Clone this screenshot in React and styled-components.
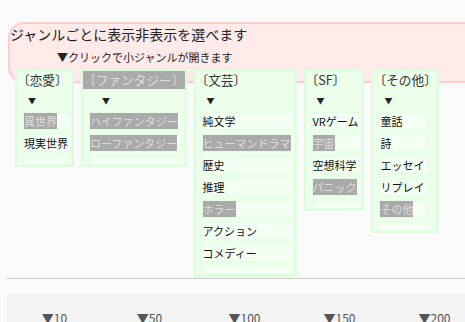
import styled, { createGlobalStyle } from 'styled-components';

const GlobalStyle = createGlobalStyle`
  html, body {
    margin: 0;
    background: #fafafa;
    overflow: hidden;
    font-family: "Noto Sans CJK JP", "Noto Sans", sans-serif;
    color: #333;
  }
`;

const Page = styled.div`
  width: 475px;
  padding: 22px 0 0 7px;
`;

const Banner = styled.div`
  width: 500px;
  height: 57px;
  margin-left: 1px;
  border: 2px solid #ffcdcd;
  border-radius: 16px;
  background: #ffeaea;
`;

const Heading = styled.div`
  font-size: 14px;
  line-height: 20px;
  color: #222;
`;

const Hint = styled.div`
  margin-top: 5px;
  padding-left: 47px;
  font-size: 11px;
  line-height: 16px;
  color: #222;
`;

const Columns = styled.div`
  position: relative;
  display: flex;
  align-items: flex-start;
  gap: 7px;
  margin-top: -14px;
  padding-left: 8px;
`;

const Column = styled.div`
  background: #ebffeb;
  border: 2px solid #dcfddc;
`;

const Title = styled.div`
  font-size: 12.7px;
  line-height: 18px;
  white-space: nowrap;
  background: ${(p) => (p.$hidden ? '#aaa' : 'transparent')};
  color: ${(p) => (p.$hidden ? '#ddd' : '#333')};
`;

const Arrow = styled.div`
  height: 23px;
  line-height: 23px;
  font-size: 8px;
  padding-left: ${(p) => p.$indent}px;
  color: #222;
`;

const List = styled.div`
  display: flex;
  flex-direction: column;
  gap: 4px;
  width: fit-content;
  margin-left: 6px;
`;

const Item = styled.div`
  height: 16px;
  padding-right: 3px;
  border: 1px solid #e3ffe3;
  background: #f3fff3;
  font-size: 11px;
  line-height: 16px;
  white-space: nowrap;
`;

const Label = styled.span`
  background: ${(p) => (p.$hidden ? '#aaa' : 'transparent')};
  color: ${(p) => (p.$hidden ? '#ddd' : '#111')};
`;

const ListEnd = styled.div`
  height: 7px;
  border: 1px solid #e3ffe3;
  background: #f3fff3;
`;

const Rule = styled.div`
  margin-top: 1px;
  height: 1px;
  background: #cbcbcb;
`;

const Scale = styled.div`
  display: grid;
  grid-template-columns: repeat(5, 95px);
  margin-top: 15px;
  padding-top: 16px;
  height: 40px;
  background: #f3f3f3;
  font-size: 12px;
  line-height: 16px;
  color: #555;
  text-align: center;
`;

const genres = [
  { name: '恋愛', items: [['異世界', true], ['現実世界', false]] },
  {
    name: 'ファンタジー',
    hidden: true,
    indent: 19,
    items: [['ハイファンタジー', true], ['ローファンタジー', true]],
  },
  {
    name: '文芸',
    items: [
      ['純文学', false],
      ['ヒューマンドラマ', true],
      ['歴史', false],
      ['推理', false],
      ['ホラー', true],
      ['アクション', false],
      ['コメディー', false],
    ],
  },
  {
    name: 'SF',
    items: [['VRゲーム', false], ['宇宙', true], ['空想科学', false], ['パニック', true]],
  },
  {
    name: 'その他',
    items: [['童話', false], ['詩', false], ['エッセイ', false], ['リプレイ', false], ['その他', true]],
  },
];

const marks = [10, 50, 100, 150, 200];

function App() {
  return (
    <Page>
      <GlobalStyle />
      <Banner>
        <Heading>ジャンルごとに表示非表示を選べます</Heading>
        <Hint>▼クリックで小ジャンルが開きます</Hint>
      </Banner>
      <Columns>
        {genres.map((g) => (
          <Column key={g.name}>
            <Title $hidden={g.hidden}>〔{g.name}〕</Title>
            <Arrow $indent={g.indent || 11}>▼</Arrow>
            <List>
              {g.items.map(([label, hidden]) => (
                <Item key={label}>
                  <Label $hidden={hidden}>{label}</Label>
                </Item>
              ))}
              <ListEnd />
            </List>
          </Column>
        ))}
      </Columns>
      <Rule />
      <Scale>
        {marks.map((m) => (
          <span key={m}>▼{m}</span>
        ))}
      </Scale>
    </Page>
  );
}

export default App;
